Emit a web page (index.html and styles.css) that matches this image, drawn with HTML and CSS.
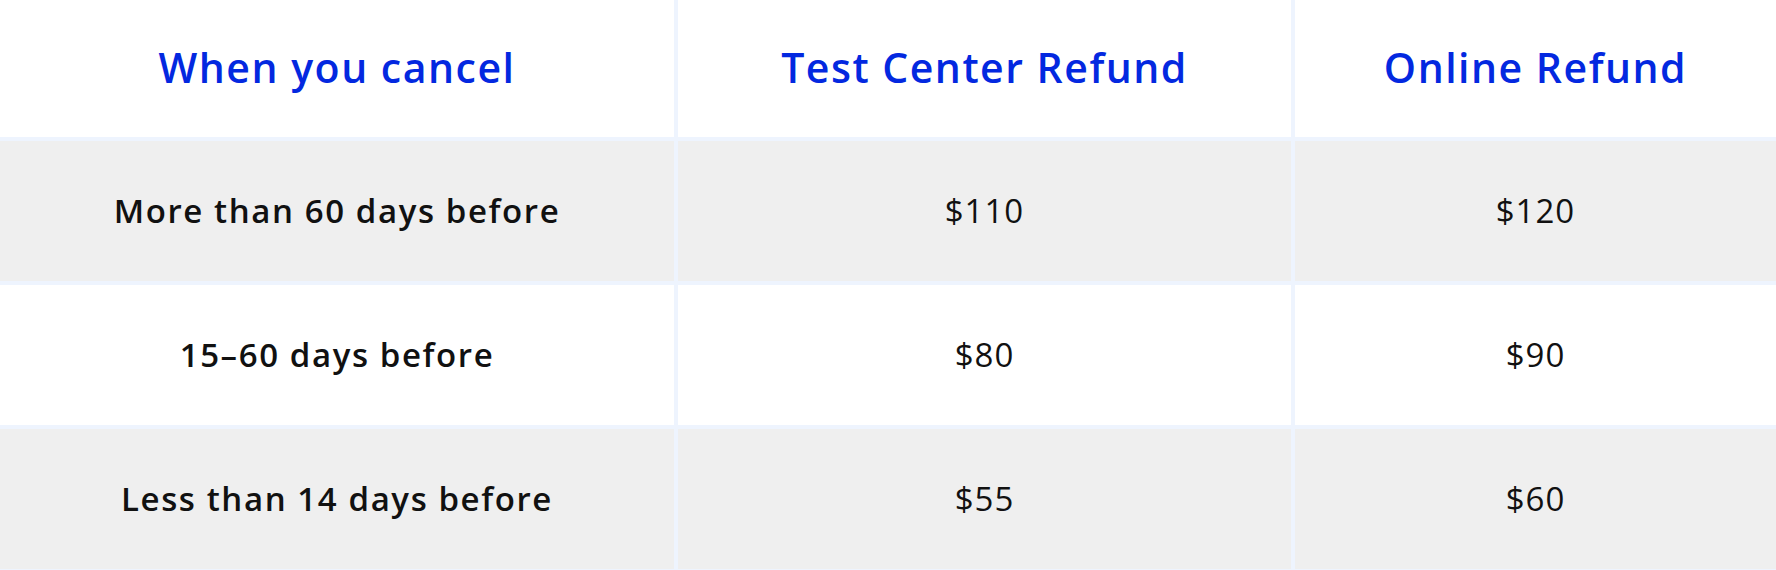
FILE: index.html
```html
<!DOCTYPE html>
<html lang="en">
<head>
<meta charset="utf-8">
<title>Cancellation refunds</title>
<link rel="stylesheet" href="styles.css">
</head>
<body>
<div class="refund-table">
  <div class="cell head">When you cancel</div>
  <div class="cell head">Test Center Refund</div>
  <div class="cell head">Online Refund</div>

  <div class="cell label shaded">More than 60 days before</div>
  <div class="cell value shaded">$110</div>
  <div class="cell value shaded">$120</div>

  <div class="cell label">15–60 days before</div>
  <div class="cell value">$80</div>
  <div class="cell value">$90</div>

  <div class="cell label shaded">Less than 14 days before</div>
  <div class="cell value shaded">$55</div>
  <div class="cell value shaded">$60</div>
</div>
</body>
</html>
```

FILE: styles.css
```css
html, body {
  margin: 0;
  padding: 0;
  background: #ffffff;
}

body {
  font-family: "Open Sans", "Noto Sans", "Liberation Sans", sans-serif;
  width: 1776px;
  height: 570px;
  overflow: hidden;
}

.refund-table {
  display: grid;
  grid-template-columns: 674px 613px 1fr;
  grid-template-rows: 137px 140px 140px 140px;
  gap: 4px;
  padding-bottom: 1px;
  background: #eef4fe;
}

.cell {
  display: flex;
  align-items: center;
  justify-content: center;
  background: #ffffff;
  color: #111111;
  white-space: nowrap;
  padding-bottom: 2px;
}

.cell.shaded {
  background: #efefef;
}

.head {
  color: #0328e0;
  font-size: 41px;
  font-weight: 600;
  letter-spacing: 1.5px;
  padding-bottom: 4px;
}

.label {
  font-size: 33px;
  font-weight: 600;
  letter-spacing: 1.6px;
}

.value {
  font-size: 33px;
  font-weight: 400;
  letter-spacing: 1px;
}
```
